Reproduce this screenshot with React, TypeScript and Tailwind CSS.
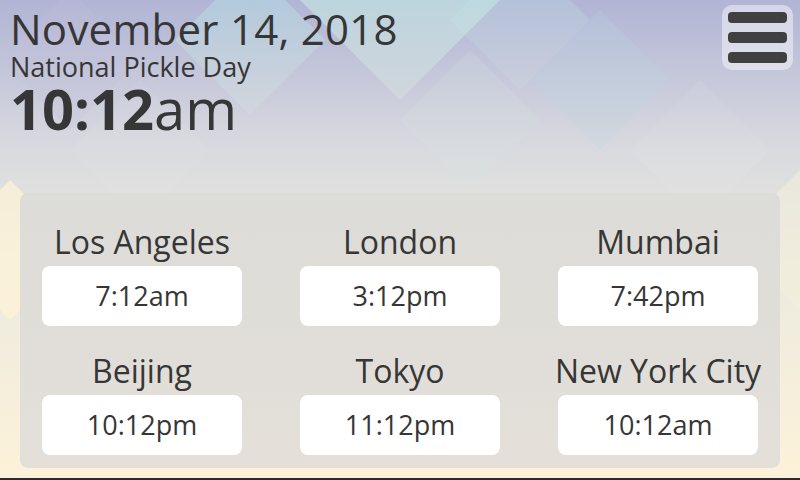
import React from 'react';

const cities = [
  { name: 'Los Angeles', time: '7:12am' },
  { name: 'London', time: '3:12pm' },
  { name: 'Mumbai', time: '7:42pm' },
  { name: 'Beijing', time: '10:12pm' },
  { name: 'Tokyo', time: '11:12pm' },
  { name: 'New York City', time: '10:12am' },
];

const diamond = (cx: number, cy: number, r: number) =>
  `${cx},${cy - r} ${cx + r},${cy} ${cx},${cy + r} ${cx - r},${cy}`;

const Backdrop: React.FC = () => (
  <svg className="absolute inset-0" width="800" height="480" viewBox="0 0 800 480">
    <defs>
      <linearGradient id="bg" x1="0" y1="0" x2="0" y2="1">
        <stop offset="0" stopColor="#b1b4d5" />
        <stop offset="0.3" stopColor="#d8d9df" />
        <stop offset="0.55" stopColor="#ebeadf" />
        <stop offset="1" stopColor="#fdf2d9" />
      </linearGradient>
      <linearGradient id="cy" x1="0" y1="0" x2="0" y2="1">
        <stop offset="0" stopColor="#a8e2e6" stopOpacity="1" />
        <stop offset="1" stopColor="#dcefe2" stopOpacity="0.3" />
      </linearGradient>
    </defs>
    <rect width="800" height="480" fill="url(#bg)" />
    <polygon points={diamond(400, -10, 110)} fill="url(#cy)" />
    <polygon points={diamond(250, 40, 75)} fill="url(#cy)" opacity="0.55" />
    <polygon points={diamond(520, 20, 70)} fill="url(#cy)" opacity="0.35" />
    <polygon points={diamond(600, 80, 70)} fill="#b8d8e0" opacity="0.25" />
    <polygon points={diamond(470, 120, 70)} fill="#d8e8e0" opacity="0.2" />
    <polygon points={diamond(700, 150, 70)} fill="#ffffff" opacity="0.06" />
    <polygon points={diamond(70, 60, 70)} fill="#c4bedc" opacity="0.25" />
    <polygon points={diamond(140, 150, 70)} fill="#ffffff" opacity="0.05" />
    <polygon points={diamond(10, 250, 70)} fill="#fff3d6" opacity="0.7" />
    <polygon points={diamond(800, 240, 70)} fill="#f6f0dc" opacity="0.5" />
  </svg>
);

export default function App() {
  return (
    <div
      className="relative w-[800px] h-[480px] overflow-hidden border-b-2 border-[#2c2c2c] text-[#363636]"
      style={{ fontFamily: '"Open Sans", "Noto Sans", sans-serif' }}
    >
      <Backdrop />
      <div className="relative flex flex-col h-full">
        <div className="flex justify-between">
          <div className="flex flex-col pt-[8px] pl-[10px]">
            <div className="text-[42px] leading-[42px] tracking-[0.25px] whitespace-nowrap">November 14, 2018</div>
            <div className="text-[27px] leading-[27px] mt-[3px] whitespace-nowrap">National Pickle Day</div>
            <div className="text-[56px] leading-[56px] whitespace-nowrap">
              <span className="font-bold">10:12</span>am
            </div>
          </div>
          <button className="mt-[5px] mr-[7px] w-[71px] h-[65px] rounded-[10px] bg-white/45 flex flex-col items-center justify-center gap-[9px]">
            <span className="block w-[59px] h-[11px] rounded-[4px] bg-[#404040]" />
            <span className="block w-[59px] h-[11px] rounded-[4px] bg-[#404040]" />
            <span className="block w-[59px] h-[11px] rounded-[4px] bg-[#404040]" />
          </button>
        </div>

        <div className="mt-[57px] mx-[20px] h-[275px] rounded-[8px] bg-gradient-to-b from-[#dcdcd8] to-[#e4dfd9] px-[22px] pt-[29px] grid grid-cols-3 gap-x-[58px] gap-y-[25px] content-start">
          {cities.map((c) => (
            <div key={c.name} className="flex flex-col items-center">
              <div className="text-[32px] leading-[40px] whitespace-nowrap">{c.name}</div>
              <div className="mt-[4px] w-[200px] h-[60px] rounded-[8px] bg-white flex items-center justify-center text-[27px]">
                {c.time}
              </div>
            </div>
          ))}
        </div>
      </div>
    </div>
  );
}
